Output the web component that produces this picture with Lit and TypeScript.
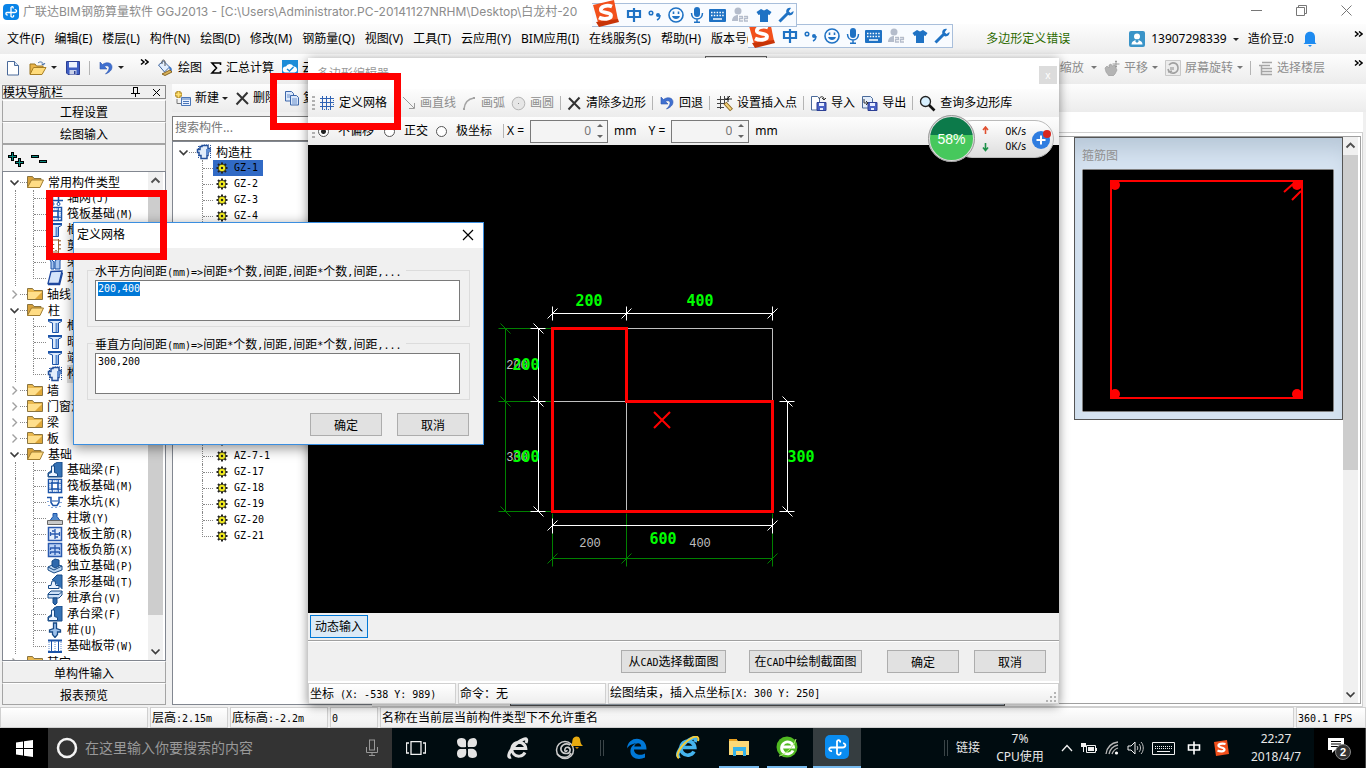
import { LitElement, html, css, svg } from "lit";
import { customElement, query } from "lit/decorators.js";
import { classMap } from "lit/directives/class-map.js";

/* ---------- shared helpers ---------- */

// Bitmap-style interface text: half-width Latin next to full-width Han.
const song = (text: string) =>
  text.split(/([\x20-\x7e]+)/).filter((p) => p).map((p) =>
    /^[\x20-\x7e]+$/.test(p) ? html`<span class="lat">${p}</span>` : p);

const icon = (w: number, h: number, body: unknown, box = `0 0 ${w} ${h}`) =>
  html`<svg class="ic" width=${w} height=${h} viewBox=${box} fill="none" aria-hidden="true">${body}</svg>`;

const B = "#1b53a8";
const glyph: Record<string, () => unknown> = {
  logo: () => icon(16, 16, svg`<rect width="16" height="16" rx="4" fill="#0a84e8"/><path d="M8 3v10M3.500 8.500h8c3 0 2.500-3.200.2-2.800M4 8.500c-2 .5-1 3 .8 2.300M8 12c.5 2 3.500 1 2.500-1M8 4c0-2 3-1.500 2 .5" stroke="#fff" stroke-width="1.300"/>`),
  file: () => icon(16, 16, svg`<path d="M2.500 1.500h7l4 4v9.500h-11z" fill="#fff" stroke="#4a6a9a"/><path d="M9.500 1.500v4h4" fill="#cfe0f5" stroke="#4a6a9a"/>`),
  open: () => icon(18, 16, svg`<path d="M1 14V4h5l1.500 2H14v2" fill="#e9b449" stroke="#9a7420"/><path d="M1 14.500 4.500 7.500H17L13 14.500z" fill="#ffdc7c" stroke="#a87f24"/><path d="M9 3c2-2 5-1 5.500 1.500M16 3l-1.500 2-2-1" stroke="#4670a8"/>`),
  save: () => icon(16, 16, svg`<path d="M1.500 1.500h13v13H3l-1.500-1.500z" fill="#3f5fc4" stroke="#2c3f94"/><path d="M4 2h8v5.500H4z" fill="#eef3ff"/><path d="M4.500 10h7v4.500h-7z" fill="#c8d0e8"/><path d="M9 11h1.500v3H9z" fill="#2c3f94"/>`),
  undo: () => icon(16, 16, svg`<path d="M2 2v7h7L6.500 6.500C9 5 11.500 6 11 8.500c-.3 2-1.500 3.500-3.500 5.500 4-1.500 6.500-4 6.500-7C14 2.500 8.500 1.500 4.500 4.500z" fill="#3f70d0" stroke="#2f58b0" stroke-width=".6"/>`),
  more: () => icon(9, 7, svg`<path d="m1 .5 3 2.500-3 2.500M5 .5 8 3 5 5.500" stroke="#000" stroke-width="1.500"/>`),
  paint: () => icon(17, 17, svg`<path d="m1.500 6 5-4 6 6-5 5z" fill="#e3efff" stroke="#3d649d"/><path d="M5 5V2.500C5 .5 8 .5 8 3v4" stroke="#555"/><path d="M12 7.500c2 .5 3.500 2 2.500 5-2-1-2.500-3-2.500-5z" fill="#3a74c8"/><path d="m5 15 8-4 2 2-7 3.500z" fill="#d9b35a" stroke="#856323"/>`),
  sum: () => icon(12, 14, svg`<path d="M10.500 4V2H2l4.500 5L2 12h8.500v-2" stroke="#000" stroke-width="1.600"/>`),
  cloud: () => icon(16, 16, svg`<rect width="16" height="16" fill="#1c8cd8"/><path d="M3.500 12.500a3 3 0 0 1 .5-6 4 4 0 0 1 7.500 0 3 3 0 0 1 1 6z" fill="#fff"/><path d="m5 9 2.500 2 4-4" stroke="#1c8cd8" stroke-width="1.500"/>`),
  create: () => icon(18, 17, svg`<path d="M4.500 1v7M1 4.500h7" stroke="#a8801c" stroke-width="4"/><path d="M4.500 1.500v6M1.500 4.500h6" stroke="#ffe070" stroke-width="2"/><path d="M3 9v4.500h4" stroke="#777"/><path d="M7.500 7.500h9v8h-9z" fill="#eaf2ff" stroke="#4a76b8"/><path d="M8 9h8M9 11.500h6M9 13.500h6" stroke="#4a76b8"/>`),
  cross: () => icon(15, 15, svg`<path d="m2 2 11 11M12.500 1.500l-11 12" stroke="#333" stroke-width="2"/>`),
  copy: () => icon(16, 16, svg`<path d="M1.500 1.500h6l2 2V11h-8z" fill="#dbe8fb" stroke="#3e68ab"/><path d="M6.500 5.500h6l2 2V15h-8z" fill="#dbe8fb" stroke="#3e68ab"/><path d="M8 9h5M8 11h5M8 13h5M3 5h3M3 7h3" stroke="#6c92cc"/>`),
  grid: () => icon(16, 16, svg`<path d="M3.500 1v14M7.500 1v14M11.500 1v14M1 3.500h14M1 7.500h14M1 11.500h14" stroke="#2f62b4"/><path d="M14.500 3v10M3 14.500h10" stroke="#3b6cb4" stroke-dasharray="1 1"/>`),
  line: () => icon(14, 14, svg`<path d="m1 1 11 11M12.500 7v5.500H7" stroke="#9a9a9a"/>`),
  arc: () => icon(15, 15, svg`<path d="M2 13C2.500 7 6 3 12 2" stroke="#a4a4a4" stroke-width="1.500"/><path d="M1 12h2v2H1zM11 1h2v2h-2z" fill="#a4a4a4"/>`),
  circle: () => icon(15, 15, svg`<circle cx="7.500" cy="7.500" r="6.300" fill="#e6e6e6" stroke="#b4b4b4"/><path d="M7 7h1v1H7z" fill="#888"/>`),
  insert: () => icon(17, 17, svg`<path d="M4.500 1v13M8.500 1v8M1 4.500h12M1 8.500h8M1 12.500h7" stroke="#444"/><path d="m14 1-4 4M12 1v6M9 4h7" stroke="#222"/><path d="m9 8 6.500 7" stroke="#8a6420" stroke-width="4"/><path d="m9.500 8.500 5.500 6" stroke="#f2d27a" stroke-width="2"/>`),
  imp: () => icon(17, 17, svg`<path d="M1.500 1.500h6l2 2V15h-8z" fill="#fff" stroke="#4a6a9a"/><path d="M7 7.500h9v8H7z" fill="#4a62c4" stroke="#2c3f94"/><path d="M9 8h5v3H9zM10 13h3v2h-3z" fill="#e6ecff"/><path d="M9 4c1-3 5-3 5 0M12 3l2 2 2-2" stroke="#333"/>`),
  exp: () => icon(17, 17, svg`<path d="M1.500 1.500h8l2 2V13h-10z" fill="#e4eefb" stroke="#4a6a9a"/><path d="M7 7.500h9v8H7z" fill="#4a62c4" stroke="#2c3f94"/><path d="M9 8h5v3H9zM10 13h3v2h-3z" fill="#e6ecff"/><path d="M3 4v4h4M5 6l2 2-2 2" stroke="#333"/>`),
  find: () => icon(17, 17, svg`<circle cx="6.500" cy="6.500" r="5" fill="#d8f0ff" stroke="#222" stroke-width="1.300"/><path d="m10 10 5.500 5.500" stroke="#111" stroke-width="2.600"/>`),
  user: () => icon(16, 16, svg`<rect width="16" height="16" rx="2" fill="#3a94c8"/><circle cx="8" cy="5.500" r="3" fill="#fff"/><path d="M2.500 13.500c0-6 11-6 11 0z" fill="#fff"/><path d="m8 8 2 2-2 2-2-2z" fill="#3a94c8"/>`),
  bell: () => icon(14, 16, svg`<path d="M2 11.500V6c0-7 10-7 10 0v5.500l1.500 1.500H.5z" fill="#1e8bf0"/><path d="M5 14h4l-2 2z" fill="#1e8bf0"/>`),
  hand: () => icon(16, 16, svg`<path d="M1 8l2-2 2 2V5l2-1 1 2 3-1 1 3 1 2-2 4-2 2H5L2 12z" fill="#b4b4b4" stroke="#999" stroke-width=".6"/><path d="M12 .5v7M8.500 4h7M11 1.500h2M11 6.500h2" stroke="#9a9a9a"/>`),
  rotate: () => icon(16, 16, svg`<path d="M.5.5h15v15H.500z" stroke="#c8c8c8" fill="#ececec"/><path d="M4 5c3-4 9-2 9 3s-6 7-9 3M3 9l1 3 3-1" stroke="#a0a0a0" stroke-width="1.600"/><path d="M5 7h4v3H5z" fill="#bbb"/>`),
  floors: () => icon(15, 16, svg`<path d="M4 2.500h10M1 5.500h11M4 8.500h10M4 11.500h10M3.500 5v9.500H14" stroke="#a6a6a6" stroke-width="1.500"/>`),
  folder: () => icon(16, 14, svg`<path d="M.5 12.500v-11h5l1.500 2h8.500v9z" fill="#e9b84e" stroke="#8a7440"/><path d="M1 5h14v7H1z" fill="#ffdf8c"/><path d="M8 12h7V5" fill="#e0a838"/>`),
  folderOpen: () => icon(17, 14, svg`<path d="M.5 12.500v-11h5l1.500 2h7v3" fill="#d8a23c" stroke="#8a7440"/><path d="m.5 12.500 4-7.500h12l-3.500 7.500z" fill="#ffdc84" stroke="#a07c30"/>`),
  raft: () => icon(16, 16, svg`<path d="M1.500 1.500h13v13h-13z" fill="#cfe0f8" stroke="${B}" stroke-width="1.500"/><path d="M5 1v14M11 1v14M1 5h14M1 11h14" stroke="${B}" stroke-width="1.500"/><path d="M6 6h4v4H6z" fill="#fff"/><path d="M3 2v12M13 2v12M2 3h12M2 13h12" stroke="#fff" stroke-dasharray="1 1"/>`),
  axis: () => icon(16, 16, svg`<path d="M5.500 0v13M11.500 0v13M3 4.500h13M3 10.500h13" stroke="${B}" stroke-width="1.500"/><circle cx="5.500" cy="14" r="1.500" stroke="${B}"/><circle cx="11.500" cy="14" r="1.500" stroke="${B}"/><circle cx="1.500" cy="10.500" r="1.500" stroke="${B}"/>`),
  column: () => icon(16, 16, svg`<path d="M1.500 1.500h13v2l-3 1.500v9.500h-6V5l-4-1.500z" fill="#dbe9fb" stroke="${B}"/><path d="M1 2h14" stroke="${B}" stroke-width="2"/><path d="M9.500 5v9" stroke="#5b8cd0" stroke-width="2"/>`),
  wall: () => icon(16, 16, svg`<path d="M4.500 1v14M11.500 1v14M4 2h8M4 14h8" stroke="#9a6030"/><path d="M13 2v1.500M13 6v1.500M13 10v1.500M6.500 6v1M6.500 10v1M9 12v1" stroke="#9a6030" stroke-width="1.500"/>`),
  beam: () => icon(16, 16, svg`<path d="m1 2 6 6v7H4V8zM15 1 8 7v8h5V7z" fill="#a8c6ee" stroke="${B}"/>`),
  slab: () => icon(16, 16, svg`<path d="m4 1.500 11-.5-3 12.500H1z" fill="#d6e5fa" stroke="#1f49a0" stroke-width="1.300"/><path d="M1 14.500h11.500l3-12" stroke="#1f49a0" stroke-width="1.500"/>`),
  tie: () => icon(16, 16, svg`<path d="M6 1.500h6v3h2v3h-2v4h-1v3H5v-3H3v-3H1.500v-3H4v-3h2z" fill="#e2edfb" stroke="#23509c" stroke-width="1.500"/><path d="M12 1v4h2v3h-2v3h-2V5h2" fill="#5d8bd0"/><path d="M14.500 1v13M8 0h6M2.500 2v3M2.500 11v3" stroke="#23509c" stroke-dasharray="1 1"/>`),
  found: () => icon(16, 16, svg`<path d="M1 15v-4l3-2 3-7 4-2h4v15z" fill="#3471b4" stroke="#174a86"/><path d="M1.500 14.500v-3l3-1V4h3v6.500l3 1v3z" fill="#eaf3ff" stroke="#174a86"/>`),
  pit: () => icon(16, 16, svg`<path d="M0 3.500h4v5l2 3h4l2-3v-5h4" stroke="${B}" stroke-width="1.500"/><path d="M5 7h6" stroke="${B}"/><path d="M1 7v1M2 11v1M5 13v1M9 13v1M13 12v1M14 8v1" stroke="#5d8bd0" stroke-width="1.500"/>`),
  pier: () => icon(16, 16, svg`<path d="M6 3.500h4v3l3 4H3l3-4z" fill="#5088cc" stroke="${B}"/><path d="M.5 10.500h15v4H.500z" fill="#cacaca" stroke="#666"/>`),
  rebar: () => icon(16, 16, svg`<path d="M1.500 1.500h13v13h-13z" fill="#e4eefc" stroke="#2a5aae" stroke-width="1.500"/><path d="M8 3v10M3 8h10M5 5h3M3.500 6v4M12.500 6v4M8 11h3" stroke="#2a5aae" stroke-width="1.300"/>`),
  rebarTop: () => icon(16, 16, svg`<path d="M1.500 1.500h13v13h-13z" fill="#bcd3f6" stroke="#2a5aae" stroke-width="1.500"/><path d="M8 3v10M3 6h10M3 10h10M3.500 6v2M12.500 6v2M3.500 10v2M12.500 10v2" stroke="#2a5aae" stroke-width="1.300"/>`),
  pad: () => icon(16, 16, svg`<path d="m1 9 6-3 8 2v4l-8 3-6-3z" fill="#bcd6f2" stroke="#174a86"/><path d="M5 8V3l3-2 4 1v6l-4 2z" fill="#2e68ac" stroke="#174a86"/><path d="M1 9l6 3 8-4" stroke="#174a86"/>`),
  strip: () => icon(16, 16, svg`<path d="m5 6 5-5h5v14" fill="#3471b4" stroke="#174a86"/><path d="M1.500 14.500v-3H4L5 7h3l1 4.500h3v3z" fill="#eaf3ff" stroke="#174a86"/>`),
  pileCap: () => icon(16, 16, svg`<path d="m1 4 3-3h11v4l-3 3H1z" fill="#cfe2f7" stroke="#174a86"/><path d="M6 8h4v5l-2 2-2-2z" fill="#2e68ac" stroke="#174a86"/><path d="M1 4.500h11l3-3" stroke="#174a86"/>`),
  pile: () => icon(16, 16, svg`<path d="M6.500 1h3v5.500l4 1.500v2h-3v2.500L8 15.500 5.500 12.500V10h-3V8l4-1.500z" fill="#9cc0ea" stroke="#174a86" stroke-width="1.300"/>`),
  band: () => icon(16, 16, svg`<path d="M1 2.500h14M1 14h14" stroke="${B}" stroke-width="2"/><path d="M4.500 3v10M11.500 3v10" stroke="${B}"/><path d="M8 4v9M2 4v9M14 4v9" stroke="#5d8bd0" stroke-dasharray="1 1"/>`),
  gear: () => icon(12, 12, svg`<g stroke="#222" stroke-width="2"><path d="M6 .5v11M.5 6h11M2 2l8 8M10 2l-8 8"/></g><circle cx="6" cy="6" r="3.800" fill="#f4ee20" stroke="#222" stroke-width=".8"/><circle cx="6" cy="6" r="1.200" fill="#222"/>`, "0 0 12 12"),
  down: () => icon(11, 9, svg`<path d="m1.500 2.500 4 4 4-4" stroke="#3c3c3c" stroke-width="1.700"/>`),
  up: () => icon(11, 9, svg`<path d="m1.500 6.500 4-4 4 4" stroke="#505050" stroke-width="1.900"/>`),
  right: () => icon(11, 9, svg`<path d="m3.500.5 4 4-4 4" stroke="#a0a0a0" stroke-width="1.400"/>`),
  sogou: () => icon(28, 28, svg`<path d="m1 5 21-5 4 20-19 6z" fill="#f2501c"/><path d="m4 22 3 5 20-5-1-3z" fill="#c83408"/><path d="M20 6.500c-5-2-12 0-11 4 1 3 10 1 10 5 0 4-8 4-12 2" stroke="#fff" stroke-width="3.800"/>`),
  ime: () => icon(16, 16, svg`<path d="M2 4h12v6H2zM8 1v14" stroke="#1f72c4" stroke-width="2.200"/>`),
  punct: () => icon(14, 12, svg`<circle cx="3" cy="4" r="1.800" stroke="#1f72c4" stroke-width="1.500"/><circle cx="10" cy="6" r="2" fill="#1f72c4"/><path d="M12 6c0 3-1 4-3 5" stroke="#1f72c4" stroke-width="1.500"/>`),
  smile: () => icon(16, 16, svg`<circle cx="8" cy="8" r="7" stroke="#1f72c4" stroke-width="1.600"/><path d="M5.500 4.500v2.500M10.500 4.500v2.500" stroke="#1f72c4" stroke-width="1.600"/><path d="M4 9c1 4 7 4 8 0z" fill="#1f72c4"/>`),
  mic: () => icon(14, 16, svg`<rect x="4" y="0" width="6" height="10" rx="3" fill="#1f72c4"/><path d="M1.500 6c0 8 11 8 11 0M7 12v3M4 15.300h6" stroke="#1f72c4" stroke-width="1.500"/>`),
  keys: () => icon(17, 13, svg`<rect x="0" y="0" width="17" height="13" rx="1" fill="#1f72c4"/><path d="M2 3.500h13M2 6.500h13" stroke="#fff" stroke-width="1.500" stroke-dasharray="1.500 1.300"/><path d="M4 10h9" stroke="#fff" stroke-width="1.500"/>`),
  person: () => icon(18, 16, svg`<circle cx="6" cy="4" r="3.500" fill="#b4bccb"/><path d="M0 14c0-8 12-8 12 0z" fill="#b4bccb"/><path d="M6 8h11v7H6z" fill="#fff"/><path d="M7 9.500h3.500v2H7.500v2.500H11M12 9.500h3.500v2h-3v2.500H16" stroke="#b4bccb" stroke-width="1.300"/>`),
  shirt: () => icon(16, 15, svg`<path d="m5 1 3 1.500L11 1l4.500 3-2 3-1.500-.5V14H4V6.500L2.500 7l-2-3z" fill="#1f72c4"/>`),
  wrench: () => icon(16, 16, svg`<path d="m1.500 14.500 8-8" stroke="#1f72c4" stroke-width="3"/><path d="M13 1C9 0 7 4 9 7s7 1 6.500-3l-3 2-1.800-1.800z" fill="#1f72c4"/>`),
};

const base = css`
  * { box-sizing: border-box; }
  .ic { display: block; flex: none; }
  .lat { font-family: "DejaVu Sans Mono", monospace; font-size: 10px; white-space: pre; }
  .song { font: 12px/16px "Noto Sans CJK SC", sans-serif; white-space: nowrap; }
  .ui { font: 12px/16px "Noto Sans", "Noto Sans CJK SC", sans-serif; white-space: nowrap; }
  button, input, textarea { font: inherit; color: inherit; margin: 0; border-radius: 0; }
  button { white-space: nowrap; }
  .tool { display: flex; align-items: center; gap: 4px; border: 0; padding: 0; background: none; }
  .caret { width: 0; height: 0; border: 3px solid transparent; border-top-color: #222; border-bottom: 0; flex: none; }
  .off { color: #8d8d8d; }
  .off .caret { border-top-color: #777; }
  .sep { width: 1px; height: 14px; background: #b4b4b4; flex: none; }
  .grip { width: 3px; height: 14px; flex: none;
    background: repeating-linear-gradient(#b0b0b0 0 2px, transparent 2px 4px); }
  .push { height: 23px; border: 1px solid #adadad; background: #e1e1e1; padding: 0; color: #000;
    font: 12px/16px "Noto Sans CJK SC", sans-serif; }
  .bar { background: linear-gradient(#fdfdfd, #ececec); }
`;

/* ---------- input method bar ---------- */

@customElement("ime-bar")
class ImeBar extends LitElement {
  static styles = [base, css`
    :host { display: flex; align-items: center; height: 24px; width: 205px;
      background: #f8fbff; border: 1px solid #a9bfdb; border-left: 0; }
    .row { display: flex; align-items: center; justify-content: space-between; width: 100%; padding-right: 2px; }
    .mark { margin: -3px 0 -1px; }
  `];
  render() {
    return html`<div class="row"><span class="mark">${glyph.sogou()}</span>
      ${["ime", "punct", "smile", "mic", "keys", "person", "shirt", "wrench"].map((n) => glyph[n]())}</div>`;
  }
}

/* ---------- polygon editor ---------- */

const tick = (x: number, y: number, flip = false) =>
  flip ? svg`<path d="M${x - 5} ${y - 5}l10 10"/>` : svg`<path d="M${x - 5} ${y + 5}l10 -10"/>`;

@customElement("polygon-editor")
class PolygonEditor extends LitElement {
  static styles = [base, css`
    :host { display: flex; flex-direction: column; background: #f0f0f0;
      box-shadow: 0 2px 10px rgba(0, 0, 0, .45); }
    .title { height: 31px; background: #fff; color: #999; display: flex; justify-content: space-between; padding: 8px 2px 0 9px; }
    .close { width: 18px; height: 18px; border: 0; padding: 0; background: #dcdcdc; color: #fff; font-size: 10px; line-height: 16px; }
    .tools { height: 28px; display: flex; align-items: center; padding-left: 4px; gap: 6px; }
    .tools .grip + .tool { margin-left: -2px; margin-right: 9px; }
    .opts { height: 28px; display: flex; align-items: center; padding-left: 4px; }
    .radio { display: flex; align-items: center; gap: 9px; margin-right: 8px; }
    .radio:first-of-type { margin-left: 3px; margin-right: 10px; }
    .radio input { appearance: none; width: 11px; height: 11px; border: 1px solid #555; border-radius: 50%; background: #fff; }
    .radio input:checked { background: radial-gradient(#222 0 2px, #fff 3px); }
    .opts .sep { margin-left: 3px; }
    .num { display: flex; align-items: center; gap: 6px; margin-left: 3px; margin-right: 9px; }
    .box { display: flex; width: 78px; height: 23px; border: 1px solid #7a7a7a; background: #f4f4f4; align-items: center; }
    .box input { width: 60px; border: 0; background: none; text-align: right; color: #777; padding: 0; outline: 0; }
    .spin { display: flex; flex-direction: column; gap: 8px; margin-left: 6px; }
    .spin i { border: 3px solid transparent; border-top: 0; border-bottom-color: #666; }
    .spin i + i { border-top: 3px solid #666; border-bottom: 0; }
    .canvas { flex: 1; background: #000; overflow: hidden; }
    .canvas svg { display: block; }
    .dyn { height: 28px; border-bottom: 1px solid #a0a0a0; padding: 2px; }
    .toggle { width: 58px; height: 23px; padding: 0; border: 1px solid #0078d7; background: #dbeaf7; }
    .actions { height: 42px; border-top: 1px solid #fff; border-bottom: 2px solid #fff;
      display: flex; align-items: center; justify-content: flex-end; padding-right: 13px; }
    .actions .push { min-width: 72px; margin-right: 15px; }
    .actions .push:last-child { margin-right: 0; }
    .actions .cad { width: 105px; margin-right: 23px; }
    .actions .cad2 { width: 113px; margin-right: 25px; }
    .status { height: 21px; display: flex; gap: 2px; }
    .cell { border: 1px solid #d0d0d0; background: linear-gradient(#fff, #eee); padding: 1px 1px; }
    .c1 { width: 148px; } .c2 { width: 148px; }
    .c3 { flex: 1; display: flex; justify-content: space-between; align-items: flex-end; }
    .dim { font: bold 15px "DejaVu Sans Mono", monospace; fill: #0f0; text-anchor: middle; }
    .thin { font: 12px "Liberation Mono", monospace; fill: #c0c0c0; text-anchor: middle; }
  `];
  render() {
    const sep = html`<span class="sep"></span>`;
    const tool = (n: string, t: string, off = false) => html`
      <button class=${classMap({ tool: true, ui: true, off })}>${glyph[n]()}${t}</button>`;
    const num = (label: string) => html`<label class="num">${label} =
      <span class="box"><input value="0" aria-label=${label}><span class="spin"><i></i><i></i></span></span> mm</label>`;
    return html`
      <div class="title ui"><span>多边形编辑器</span><button class="close" aria-label="关闭">x</button></div>
      <div class="tools bar"><span class="grip"></span>
        ${tool("grid", "定义网格")}${tool("line", "画直线", true)}${tool("arc", "画弧", true)}${tool("circle", "画圆", true)}${sep}
        ${tool("cross", "清除多边形")}${sep}${tool("undo", "回退")}${sep}${tool("insert", "设置插入点")}${sep}
        ${tool("imp", "导入")}${tool("exp", "导出")}${sep}${tool("find", "查询多边形库")}
      </div>
      <div class="opts bar ui"><span class="grip"></span>
        ${["不偏移", "正交", "极坐标"].map((t, i) => html`<label class="radio"><input type="radio" name="offset" ?checked=${i === 0}>${t}</label>`)}
        ${sep}${num("X")}${num("Y")}
      </div>
      <div class="canvas">
        <svg width="751" height="468" viewBox="308 145 751 468" fill="none" stroke-width="1" role="img" aria-label="截面图">
          <g stroke="#008000" transform="translate(.5 .5)">
            <path d="M498 328h54M498 401h54M498 511h54M505 328v183M552 513v53M626 513v53M772 513v53M552 558h220"/>
            ${tick(505, 328, true)}${tick(505, 401, true)}${tick(505, 511, true)}${tick(552, 558)}${tick(626, 558)}${tick(772, 558)}
          </g>
          <path d="M626.500 328.500h146v73M552 401.500h74.500v110" stroke="#c0c0c0"/>
          <g stroke="#fff" transform="translate(.5 .5)">
            <path d="M552 313h220M552 306v14M626 306v14M772 306v14M538 328v183M530 328h15M530 401h15M530 511h15M552 525h220M552 518v15M772 518v15M787 401v110M779 401h15M779 511h15"/>
            ${tick(552, 313)}${tick(626, 313)}${tick(772, 313)}${tick(538, 328, true)}${tick(538, 401, true)}${tick(538, 511, true)}
            ${tick(552, 525)}${tick(772, 525)}${tick(787, 401, true)}${tick(787, 511, true)}
          </g>
          <text class="thin" x="517" y="369">200</text><text class="thin" x="517" y="461">300</text>
          <text class="thin" x="590" y="547">200</text><text class="thin" x="700" y="547">400</text>
          <path d="M552.500 328.500h74v73h146v110h-220z" stroke="#f00" stroke-width="3"/>
          <path d="m654 412 16 16M670 412l-16 16" stroke="#f00" stroke-width="2"/>
          <text class="dim" x="589" y="306">200</text><text class="dim" x="700" y="306">400</text>
          <text class="dim" x="526" y="370">200</text><text class="dim" x="526" y="462">300</text>
          <text class="dim" x="801" y="462">300</text><text class="dim" x="663" y="544">600</text>
        </svg>
      </div>
      <div class="dyn"><button class="toggle ui">动态输入</button></div>
      <div class="actions">
        <button class="push cad">${song("从CAD选择截面图")}</button>
        <button class="push cad2">${song("在CAD中绘制截面图")}</button>
        <button class="push">确定</button><button class="push">取消</button>
      </div>
      <div class="status song">
        <div class="cell c1">${song("坐标 (X: -538 Y: 989)")}</div>
        <div class="cell c2">命令：无</div>
        <div class="cell c3"><span>${song("绘图结束，插入点坐标[X: 300 Y: 250]")}</span>
          ${icon(11, 11, svg`<path d="M8 1h2v2H8zM8 5h2v2H8zM8 9h2v2H8zM4 5h2v2H4zM4 9h2v2H4zM0 9h2v2H0z" fill="#b4b4b4"/>`)}</div>
      </div>`;
  }
}

/* ---------- grid definition dialog ---------- */

@customElement("grid-dialog")
class GridDialog extends LitElement {
  @query("#horizontal") first!: HTMLTextAreaElement;
  static styles = [base, css`
    :host { display: flex; flex-direction: column; background: #f0f0f0; border: 1px solid #3a8ee0;
      box-shadow: 0 3px 12px rgba(0, 0, 0, .45); }
    .title { height: 25px; background: #fff; padding: 4px 9px 0 3px; display: flex; justify-content: space-between; }
    .x { border: 0; background: none; padding: 0; height: 16px; }
    form { padding: 15px 13px 8px 13px; display: flex; flex-direction: column; gap: 9px; }
    fieldset { margin: 0; border: 1px solid #dcdcdc; padding: 0 9px 6px 7px; height: 64px; min-width: 0; }
    legend { padding: 0 5px 0 0; height: 14px; line-height: 14px; }
    textarea { display: block; width: 100%; height: 41px; margin-top: 3px; resize: none; border: 1px solid #7a7a7a; background: #fff;
      outline: 0; padding: 1px 2px; font: 10px/14px "DejaVu Sans Mono", monospace; color: #000; }
    textarea::selection { background: #0078d7; color: #fff; }
    .row { display: flex; justify-content: flex-end; gap: 15px; margin: 4px 1px 0 0; }
    .push { width: 72px; }
  `];
  firstUpdated() {
    this.first.focus();
    this.first.select();
  }
  render() {
    const group = (id: string, head: string, value: string) => html`<fieldset>
      <legend class="song"><label for=${id}>${song(head + "方向间距(mm)=>间距*个数,间距,间距*个数,间距,...")}</label></legend>
      <textarea id=${id} .value=${value}></textarea></fieldset>`;
    return html`
      <div class="title ui"><span>定义网格</span><button class="x" aria-label="关闭">${icon(12, 12, svg`<path d="m1 1 10 10M11 1 1 11" stroke="#000" stroke-width="1.200"/>`)}</button></div>
      <form>
        ${group("horizontal", "水平", "200,400")}${group("vertical", "垂直", "300,200")}
        <div class="row"><button type="button" class="push">确定</button><button type="button" class="push">取消</button></div>
      </form>`;
  }
}

/* ---------- task bar ---------- */

const sogouSmall = svg`<path d="m1 2 13-2 2 14-13 2z" fill="#f2501c"/><path d="M12.500 4C9 3 5 4 5.500 6s6 1 6 3.500-5 2-7 1" stroke="#fff" stroke-width="2.200"/>`;

@customElement("task-bar")
class TaskBar extends LitElement {
  static styles = [base, css`
    :host { display: flex; height: 40px; background: #000c10; color: #e8e8e8; }
    .cellb { border: 0; padding: 0; background: none; width: 48px; display: flex; align-items: center; justify-content: center; flex: none; }
    .start { background: #000; }
    .search { width: 344px; background: #333; display: flex; align-items: center; gap: 7px; padding: 0 14px 0 8px; }
    .search input { flex: 1; min-width: 0; border: 0; outline: 0; background: none; padding: 0; font-size: 14px; }
    .search input::placeholder { color: #999; opacity: 1; }
    .apps { display: flex; flex: 1; gap: 3px; }
    .gripv { width: 4px; height: 16px; border: 1px solid #3b4548; border-width: 0 1px; align-self: center; flex: none; }
    .apps .gripv { margin: 0 6px 0 4px; }
    .run { border-bottom: 2px solid #76b9ed; width: 40px; margin: 0 3px 0 4px; }
    .first { margin-right: 1px; }
    .live { background: #353d40; width: 48px; margin: 0; }
    .tray { display: flex; align-items: center; gap: 8px; }
    .meter, .clock { text-align: center; line-height: 18px; }
    .meter { width: 50px; margin: 0 8px 0 7px; }
    .clock { width: 60px; margin-left: 8px; }
    .note { width: 52px; align-self: stretch; background: #000; display: flex; align-items: center; justify-content: center; border-right: 1px solid #444; }
    .cn { margin: 0 4px; }
    .count { font: bold 11px "Liberation Sans", sans-serif; fill: #fff; text-anchor: middle; }
  `];
  render() {
    const app = (pic: unknown, cls = "") => html`<button class="cellb ${cls}">${pic}</button>`;
    const e = (c: string) => svg`<path d="M1 11.500C2-2 21-1.500 20.500 12.500H8c0 5.500 7 6.500 11 4v4C12 24 3.500 21 4.500 13 5 9.500 8 7 10.500 6.500 5.500 6.500 2.500 9 1 11.500zM8.200 9.500h7c0-4.500-6-4.500-7 0z" fill="${c}"/>`;
    const ring = (c: string, sw: number) => svg`<path d="M18 15.500A7 7 0 1 1 18.800 11.500H6M4 20C-1 22 3 12 9 7s13-8 10-1" stroke="${c}" stroke-width="${sw}"/>`;
    return html`
      <button class="cellb start" aria-label="开始">${icon(17, 17, svg`<path d="m0 2.500 7-1V8H0zM8 1.300 17 0v8H8zM0 9h7v6.500l-7-1zM8 9h9v8l-9-1.300z" fill="#fff"/>`)}</button>
      <label class="search ui">${icon(22, 22, svg`<circle cx="11" cy="11" r="9" stroke="#f4f4f4" stroke-width="2.500"/>`)}
        <input placeholder="在这里输入你要搜索的内容" aria-label="搜索">
        ${icon(12, 18, svg`<rect x="3.500" y="1" width="5" height="10" stroke="#999"/><path d="M.5 8v5.500h11V8M6 13.500v3M3 16.500h6" stroke="#999"/>`)}</label>
      <div class="apps">
        ${app(icon(20, 14, svg`<path d="M5 .500h10v13H5zM3 2H.500v10H3M17 2h2.500v10H17" stroke="#f0f0f0" stroke-width="1.300"/>`))}
        ${app(icon(22, 22, svg`<g fill="#e4e4e4"><path d="M1 4c0-4 9-4 9 0v6C5 11 1 10 1 4zM18 1c4 0 4 9 0 9h-6C11 5 12 1 18 1zM21 18c0 4-9 4-9 0v-6c5-1 9 0 9 6zM4 21c-4 0-4-9 0-9h6c1 5 0 9-6 9z"/></g>`))}
        ${app(icon(22, 22, ring("#e4e4e4", 3)))}
        ${app(icon(28, 26, svg`<circle cx="10" cy="15" r="8.500" stroke="#ccc" stroke-width="1.500"/><path d="M15 10c-5-3-10 1-9 5s8 5 9 1-4-5-5-2 2 3 2 1M2 19c5 5 12 4 14-1" stroke="#ccc" stroke-width="1.600"/><path d="M16 11c1-1 1-3 1.500-6C18 1 24 0 25 4c.5 4 1 5 3 7z" fill="#e8ab10"/><path d="M20 12h4l-2 2z" fill="#c88808"/>`))}
        <span class="gripv"></span>
        ${app(icon(22, 22, e("#0078d7")))}
        ${app(icon(24, 24, svg`${ring("#45b4ee", 3.600)}<path d="M3 22C-2 20 6 8 14 3s9-1 8 2" stroke="#f4cc38" stroke-width="2"/>`))}
        ${app(icon(22, 20, svg`<path d="M1 2h7l2 2h11v14H1z" fill="#fbd977"/><path d="M1 2h8v2H1z" fill="#e8a020"/><path d="M5 10h13v9h-3v-5H8v5H5z" fill="#35b3ea"/>`), "run first")}
        ${app(icon(22, 22, svg`<circle cx="11" cy="11" r="10.500" fill="#50b822"/><path d="M17 14.500A6 6 0 1 1 17.500 11H6" stroke="#fff" stroke-width="2.800"/><path d="M3 20c2 0 14-6 17-17" stroke="#b8ec80"/>`), "run")}
        ${app(icon(24, 24, svg`<rect width="24" height="24" rx="5" fill="#0a8cf0"/><path d="M12 6v13M5.500 12.500h12c4 0 3.500-4.500.5-4M6 12.500c-3 .5-2 4 1 3.500M12 18c.5 3 4.500 2 3.500-1M12 7c0-3 4-2 3 .5" stroke="#fff" stroke-width="1.800"/>`), "run live")}
      </div>
      <div class="tray ui">
        <span class="gripv"></span><span>链接</span>
        <div class="meter">7%<br>CPU使用</div>
        ${icon(12, 8, svg`<path d="m1 7 5-5.500L11 7" stroke="#f0f0f0" stroke-width="1.300"/>`)}
        ${icon(16, 14, svg`<path d="M5.500 4.500h9v7h-9z" stroke="#f0f0f0"/><path d="M7 6h6v4H7zM15 7h1v3h-1zM0 2h5v4H3v5H2V6H0z" fill="#f0f0f0"/>`)}
        ${icon(14, 14, svg`<path d="M1 13C2 6 6 2 13 1M4 13c1-5 4-8 9-9M7 13c1-3 3-5 6-6" stroke="#b8b8b8" stroke-width="1.300"/><circle cx="11.500" cy="12" r="1.600" fill="#fff"/>`)}
        ${icon(17, 14, svg`<path d="M1 5h3l4-4v12L4 9H1z" stroke="#f0f0f0"/><path d="M10 5c1 1 1 3 0 4M12 3c2 2 2 6 0 8M14 1c3 3 3 9 0 12" stroke="#c0c0c0"/>`)}
        ${icon(23, 13, svg`<path d="M.5.5h22v12H.500z" stroke="#f0f0f0"/><path d="M3 4.500h17M3 6.500h17" stroke="#f0f0f0" stroke-dasharray="1 1"/><path d="M5 9.500h13" stroke="#f0f0f0"/>`)}
        <span class="cn">${icon(14, 14, svg`<path d="M1.500 4h11v5h-11zM7 .5v13" stroke="#fff" stroke-width="1.600"/>`)}</span>
        ${icon(17, 17, sogouSmall)}
        <div class="clock">22:27<br>2018/4/7</div>
        <span class="note">${icon(26, 26, svg`<path d="M1 3h16v12H8l-3 3v-3H1z" fill="#fff"/><path d="M4 6.500h10M4 9h10M4 11.500h7" stroke="#000"/><circle cx="16" cy="17" r="7.500" fill="#333" stroke="#888"/><text class="count" x="16" y="21">2</text>`)}</span>
      </div>`;
  }
}

/* ---------- main window ---------- */

type Leaf = [string, string, boolean?];
const tree: Array<{ name: string; open?: boolean; kids?: Leaf[] }> = [
  { name: "常用构件类型", open: true, kids: [["axis", "轴网(J)"], ["raft", "筏板基础(M)"], ["column", "框柱(Z)"], ["wall", "剪力墙(Q)"], ["beam", "梁(L)"], ["slab", "现浇板(B)"]] },
  { name: "轴线" },
  { name: "柱", open: true, kids: [["column", "框柱(Z)"], ["column", "暗柱(Z)"], ["column", "端柱(Z)"], ["tie", "构造柱(Z)", true]] },
  { name: "墙" }, { name: "门窗洞" }, { name: "梁" }, { name: "板" },
  { name: "基础", open: true, kids: [["found", "基础梁(F)"], ["raft", "筏板基础(M)"], ["pit", "集水坑(K)"], ["pier", "柱墩(Y)"], ["rebar", "筏板主筋(R)"], ["rebarTop", "筏板负筋(X)"], ["pad", "独立基础(P)"], ["strip", "条形基础(T)"], ["pileCap", "桩承台(V)"], ["found", "承台梁(F)"], ["pile", "桩(U)"], ["band", "基础板带(W)"]] },
  { name: "其它" },
];
const members = [...Array.from({ length: 16 }, (_, i) => `GZ-${i + 1}`), "AZ-5", "AZ-6", "AZ-7-1", "GZ-17", "GZ-18", "GZ-19", "GZ-20", "GZ-21"];
const menus = ["文件(F)", "编辑(E)", "楼层(L)", "构件(N)", "绘图(D)", "修改(M)", "钢筋量(Q)", "视图(V)", "工具(T)", "云应用(Y)", "BIM应用(I)", "在线服务(S)", "帮助(H)", "版本号(B)"];

@customElement("app-root")
class AppRoot extends LitElement {
  static styles = [base, css`
    :host { display: grid; grid-template-rows: 24px 30px 30px minmax(0, 1fr) 21px 40px; height: 100vh; position: relative;
      overflow: hidden; background: #f0f0f0; color: #000; }
    .title { background: #fff; display: flex; align-items: center; padding: 0 14px 0 3px; gap: 4px; color: #8c8c8c; }
    .title .name { flex: 1; font-family: Inter, "Noto Sans CJK SC", sans-serif; }
    .win { display: flex; gap: 34px; color: #777; padding-bottom: 3px; }
    .win button { border: 0; padding: 0; background: none; }
    .menu { display: flex; align-items: center; padding: 0 3px 0 7px; }
    .items { display: flex; gap: 10px; flex: 1; }
    .items a { color: #000; text-decoration: none; }
    .warn { color: #2c6a00; margin-right: 59px; }
    .acct { display: flex; align-items: center; gap: 6px; }
    .acct .more { margin-left: 31px; align-self: flex-start; }
    .toolbar { display: flex; align-items: center; padding: 0 3px 3px 5px; gap: 8px; }
    .toolbar .left { display: flex; align-items: center; gap: 8px; flex: 1; }
    .toolbar .grow { margin-left: 8px; align-self: flex-start; }
    .rightTools { display: flex; align-items: center; gap: 7px; }
    .rightTools .more { margin-left: 22px; align-self: flex-start; }
    .main { display: flex; min-height: 0; gap: 5px; }
    .nav { width: 167px; display: flex; flex-direction: column; padding: 1px 1px 2px 2px; flex: none; }
    .nav h2 { margin: 0 0 1px; font: inherit; height: 14px; line-height: 14px; border: 1px solid #888; display: flex; justify-content: space-between;
      align-items: center; padding-right: 4px; flex: none; }
    .pins { display: flex; gap: 12px; align-items: center; }
    .tab { height: 22px; border: 1px solid #a4a4a4; border-top-color: #fff; background: #f0f0f0; padding: 1px 0 0; flex: none;
      font: 12px/16px "Noto Sans CJK SC", sans-serif; }
    .mini { height: 27px; border: 1px solid #a4a4a4; border-width: 1px 1px 0; padding: 7px 5px; display: flex; gap: 7px; background: #f4f4f4; flex: none; }
    .tree { flex: 1; min-height: 0; border: 1px solid #828790; background: #fff; display: flex; overflow: hidden; }
    .rows { flex: 1; min-width: 0; margin: 0; padding: 2px 0 0 6px; list-style: none; overflow: hidden; }
    .rows li { display: flex; align-items: center; height: 16px; }
    .rows .lead { width: 7px; border-bottom: 1px dotted #888; flex: none; }
    .rows .t { margin-left: 4px; }
    .g0 { width: 18px; height: 16px; margin-left: 6px; border-left: 1px dotted #888; flex: none; }
    .g1 { width: 14px; height: 16px; border-left: 1px dotted #888; flex: none; }
    .g1::before { content: ""; display: block; height: 8px; width: 12px; border-bottom: 1px dotted #888; }
    .g1.end { border-left: 0; }
    .g1.end::before { border-left: 1px dotted #888; }
    .sel { background: #dcdcdc; }
    .sb { width: 15px; background: #f0f0f0; display: flex; flex-direction: column; align-items: center; justify-content: space-between; padding: 4px 0; flex: none; }
    .sb .thumb { width: 15px; flex: 1; background: #cdcdcd; margin: 5px 0 32px; }
    .nav .sb { margin-right: 2px; }
    .center { flex: 1; min-width: 0; display: flex; flex-direction: column; }
    .sub { height: 28px; display: flex; align-items: center; gap: 7px; padding-left: 2px; flex: none; }
    .sub .tool { gap: 3px; }
    .panes { flex: 1; display: flex; min-height: 0; background: #fff; }
    .list { width: 200px; display: flex; flex-direction: column; flex: none; padding: 4px 0 2px; background: #f0f0f0; }
    .find { width: 100%; height: 25px; border: 1px solid #7a7a7a; background: #fff; padding: 0 2px 4px; flex: none; color: #666; outline: 0; }
    .find::placeholder { color: #777; opacity: 1; }
    .list .rows { padding: 2px 0 0 5px; }
    .list .t { margin-left: 4px; }
    .list .g1 { margin-left: 24px; width: 11px; }
    .list .g1::before { width: 10px; }
    .item { display: flex; align-items: center; gap: 6px; height: 16px; padding: 0 5px 0 3px; }
    .item.on { background: #316ac5; }
    .work { flex: 1; display: flex; flex-direction: column; border-right: 3px solid #f0f0f0; }
    .strip { height: 20px; flex: none; }
    .sheet { flex: 1; min-height: 0; border: 1px solid #d0d0d0; border-left: 0; padding: 3px 1px 2px 0; display: flex; }
    .sheetIn { flex: 1; border: 1px solid #a0a0a0; border-left: 0; display: flex; justify-content: flex-end; align-items: flex-start; padding-right: 2px; }
    .preview { width: 269px; height: 283px; background: #d6e3f1; border: 1px solid #555; box-shadow: inset 0 20px 20px -8px #b8c8d8; padding: 10px 7px 7px; color: #909090; }
    .pic { display: block; margin-top: 5px; }
    .sheetIn .sb { align-self: stretch; }
    .sheetIn .thumb { margin: 5px 0 220px; }
    .status { display: flex; gap: 2px; background: #f0f0f0; }
    .status div { border: 1px solid #d0d0d0; background: linear-gradient(#fff, #eee); padding: 1px; }
    .s0 { width: 148px; } .s1 { width: 78px; } .s2 { width: 98px; } .s3 { width: 48px; } .s4 { flex: 1; } .s5 { width: 70px; }
    .back { position: absolute; left: 510px; top: 690px; width: 495px; height: 16px; border: 1px solid #555; background: #b4c0cc; }
    .back2 { position: absolute; left: 705px; top: 56px; width: 62px; height: 12px; border: 1px solid #666; }
    .editor { position: absolute; left: 308px; top: 58px; width: 751px; height: 646px; }
    .dialog { position: absolute; left: 73px; top: 222px; width: 411px; height: 223px; }
    .ime1 { position: absolute; left: 592px; top: 3px; }
    .ime2 { position: absolute; left: 748px; top: 24px; }
    .mark { position: absolute; border: 7px solid #f00; pointer-events: none; }
    .m1 { left: 270px; top: 73px; width: 131px; height: 57px; }
    .m2 { left: 46px; top: 190px; width: 121px; height: 70px; }
    .ball { position: absolute; left: 928px; top: 115px; display: flex; align-items: center; }
    .pct { width: 47px; height: 47px; border: 2px solid #ddd; outline: 1px solid #999; outline-offset: -1px; border-radius: 50%; color: #fff; z-index: 1;
      background: linear-gradient(#0c7a4a 0 42%, #46c85c 42%); display: flex; align-items: center; justify-content: center;
      font-family: "Liberation Sans", sans-serif; font-size: 14px; }
    .pill { height: 38px; width: 101px; margin-left: -22px; border: 1px solid #bbb; border-radius: 19px; background: linear-gradient(#fff, #ddd);
      display: flex; align-items: center; gap: 5px; padding-left: 28px; font-size: 10px; line-height: 15px; }
    .pill .spd { flex: 1; text-align: right; }
  `];

  render() {
    const tool = (n: string, t: string, caret = false, off = false) => html`
      <button class=${classMap({ tool: true, ui: true, off })} aria-label=${t || n}>${glyph[n]()}${t}${caret ? html`<i class="caret"></i>` : ""}</button>`;
    const leaf = ([n, t, on]: Leaf, last: boolean) => html`<li><span class="g0"></span><span class=${classMap({ g1: true, end: last })}></span>
      ${glyph[n]()}<span class=${classMap({ t: true, sel: !!on })}>${song(t)}</span></li>`;
    return html`
      <header class="title ui">${glyph.logo()}<span class="name">广联达BIM钢筋算量软件 GGJ2013 - [C:\\Users\\Administrator.PC-20141127NRHM\\Desktop\\白龙村-20</span>
        <span class="win">
          <button aria-label="最小化">${icon(11, 11, svg`<path d="M0 5.500h11" stroke="#777"/>`)}</button>
          <button aria-label="还原">${icon(11, 11, svg`<path d="M.5 2.500h8v8h-8zM2.500 2V.500h8v8H9" stroke="#777"/>`)}</button>
          <button aria-label="关闭">${icon(11, 11, svg`<path d="m.5.5 10 10M10.500.5l-10 10" stroke="#777"/>`)}</button>
        </span></header>
      <nav class="menu bar ui"><div class="items">${menus.map((m) => html`<a href="#">${m}</a>`)}</div>
        <span class="warn">多边形定义错误</span>
        <span class="acct">${glyph.user()}13907298339 <i class="caret"></i>&nbsp;造价豆:0&nbsp;${glyph.bell()}<span class="more">${glyph.more()}</span></span></nav>
      <div class="toolbar bar">
        <div class="left">${tool("file", "")}${tool("open", "", true)}${tool("save", "")}<span class="sep"></span>${tool("undo", "", true)}
          <span class="grow">${glyph.more()}</span>${tool("paint", "绘图")}${tool("sum", "汇总计算")}${tool("cloud", "云检查")}</div>
        <div class="rightTools"><button class="tool ui off">缩放&nbsp;<i class="caret"></i></button>${tool("hand", "平移", true, true)}${tool("rotate", "屏幕旋转", true, true)}
          <span class="sep"></span>${tool("floors", "选择楼层", false, true)}<span class="more">${glyph.more()}</span></div>
      </div>
      <div class="main">
        <aside class="nav song">
          <h2>模块导航栏<span class="pins">${icon(9, 10, svg`<path d="M2.500 0v6M6.500 0v6M2 .5h5M0 6.500h9M4.500 7v3" stroke="#000"/>`)}${icon(9, 9, svg`<path d="m1 1 7 7M8 1 1 8" stroke="#000"/>`)}</span></h2>
          <button class="tab">工程设置</button><button class="tab">绘图输入</button>
          <div class="mini">${icon(16, 15, svg`<path d="M4.500 0v9M0 4.500h9M11.500 6v9M7 10.500h9" stroke="#000" stroke-width="3"/><path d="M4.500 1v7M1 4.500h7M11.500 7v7M8 10.500h7" stroke="#0a8a80"/>`)}
            ${icon(16, 12, svg`<path d="M0 4.500h8M8 9.500h8" stroke="#000" stroke-width="3"/><path d="M1 4.500h6M9 9.500h6" stroke="#0a8a80"/>`)}</div>
          <div class="tree"><ul class="rows">${tree.map((g) => html`
            <li>${g.open ? glyph.down() : glyph.right()}<span class="lead"></span>${g.open ? glyph.folderOpen() : glyph.folder()}<span class="t">${g.name}</span></li>
            ${(g.kids ?? []).map((k, i, a) => leaf(k, i === a.length - 1))}`)}</ul>
            <div class="sb">${glyph.up()}<span class="thumb"></span>${glyph.down()}</div></div>
          <button class="tab">单构件输入</button><button class="tab">报表预览</button>
        </aside>
        <section class="center">
          <div class="sub bar">${tool("create", "新建", true)}${tool("cross", "删除")}${tool("copy", "复制")}</div>
          <div class="panes">
            <div class="list song"><input class="find" placeholder="搜索构件..." aria-label="搜索构件">
              <div class="tree"><ul class="rows">
                <li>${glyph.down()}<span class="lead"></span>${glyph.tie()}<span class="t">构造柱</span></li>
                ${members.map((m, i) => html`<li><span class=${classMap({ g1: true, end: i === members.length - 1 })}></span>
                  <span class=${classMap({ item: true, on: i === 0 })}>${glyph.gear()}${song(m)}</span></li>`)}</ul></div></div>
            <div class="work"><div class="strip"></div><div class="sheet"><div class="sheetIn">
              <div class="preview ui">箍筋图
                <svg class="pic" width="252" height="243" viewBox="1084 169 252 243" fill="none" role="img" aria-label="箍筋图">
                  <path d="M1084 169h252v243h-252z" fill="#000" stroke="#fff"/>
                  <path d="M1113 181h191v217h-191z" stroke="#f00" stroke-width="2"/>
                  <path d="m1286 192 9-8M1294 200l9-9" stroke="#f00" stroke-width="2"/>
                  <g fill="#f00"><circle cx="1117" cy="185" r="5"/><circle cx="1299" cy="185" r="5"/><circle cx="1117" cy="394" r="5"/><circle cx="1299" cy="394" r="5"/></g>
                </svg></div>
              <div class="sb">${glyph.up()}<span class="thumb"></span>${glyph.down()}</div>
            </div></div></div>
          </div>
        </section>
      </div>
      <footer class="status song"><div class="s0"></div><div class="s1">${song("层高:2.15m")}</div><div class="s2">${song("底标高:-2.2m")}</div>
        <div class="s3">${song("0")}</div><div class="s4">名称在当前层当前构件类型下不允许重名</div><div class="s5">${song("360.1 FPS")}</div></footer>
      <task-bar></task-bar>
      <div class="back"></div><div class="back2"></div>
      <polygon-editor class="editor"></polygon-editor>
      <grid-dialog class="dialog"></grid-dialog>
      <ime-bar class="ime2"></ime-bar>
      <ime-bar class="ime1"></ime-bar>
      <div class="ball ui"><span class="pct">58%</span><span class="pill">
        ${icon(7, 26, svg`<path d="M3.500 8V2M1 4l2.500-3L6 4" stroke="#e05030" stroke-width="1.600"/><path d="M3.500 17v7M1 21.500l2.500 3 2.500-3" stroke="#1c9048" stroke-width="1.600"/>`)}
        <span class="spd">0K/s<br>0K/s</span>
        ${icon(22, 22, svg`<circle cx="10" cy="12" r="9" fill="#2f7de0"/><path d="M10 7.500v9M5.500 12h9" stroke="#fff" stroke-width="2"/><circle cx="16" cy="6" r="4" fill="#d82820"/>`)}</span></div>
      <div class="mark m1"></div><div class="mark m2"></div>`;
  }
}
